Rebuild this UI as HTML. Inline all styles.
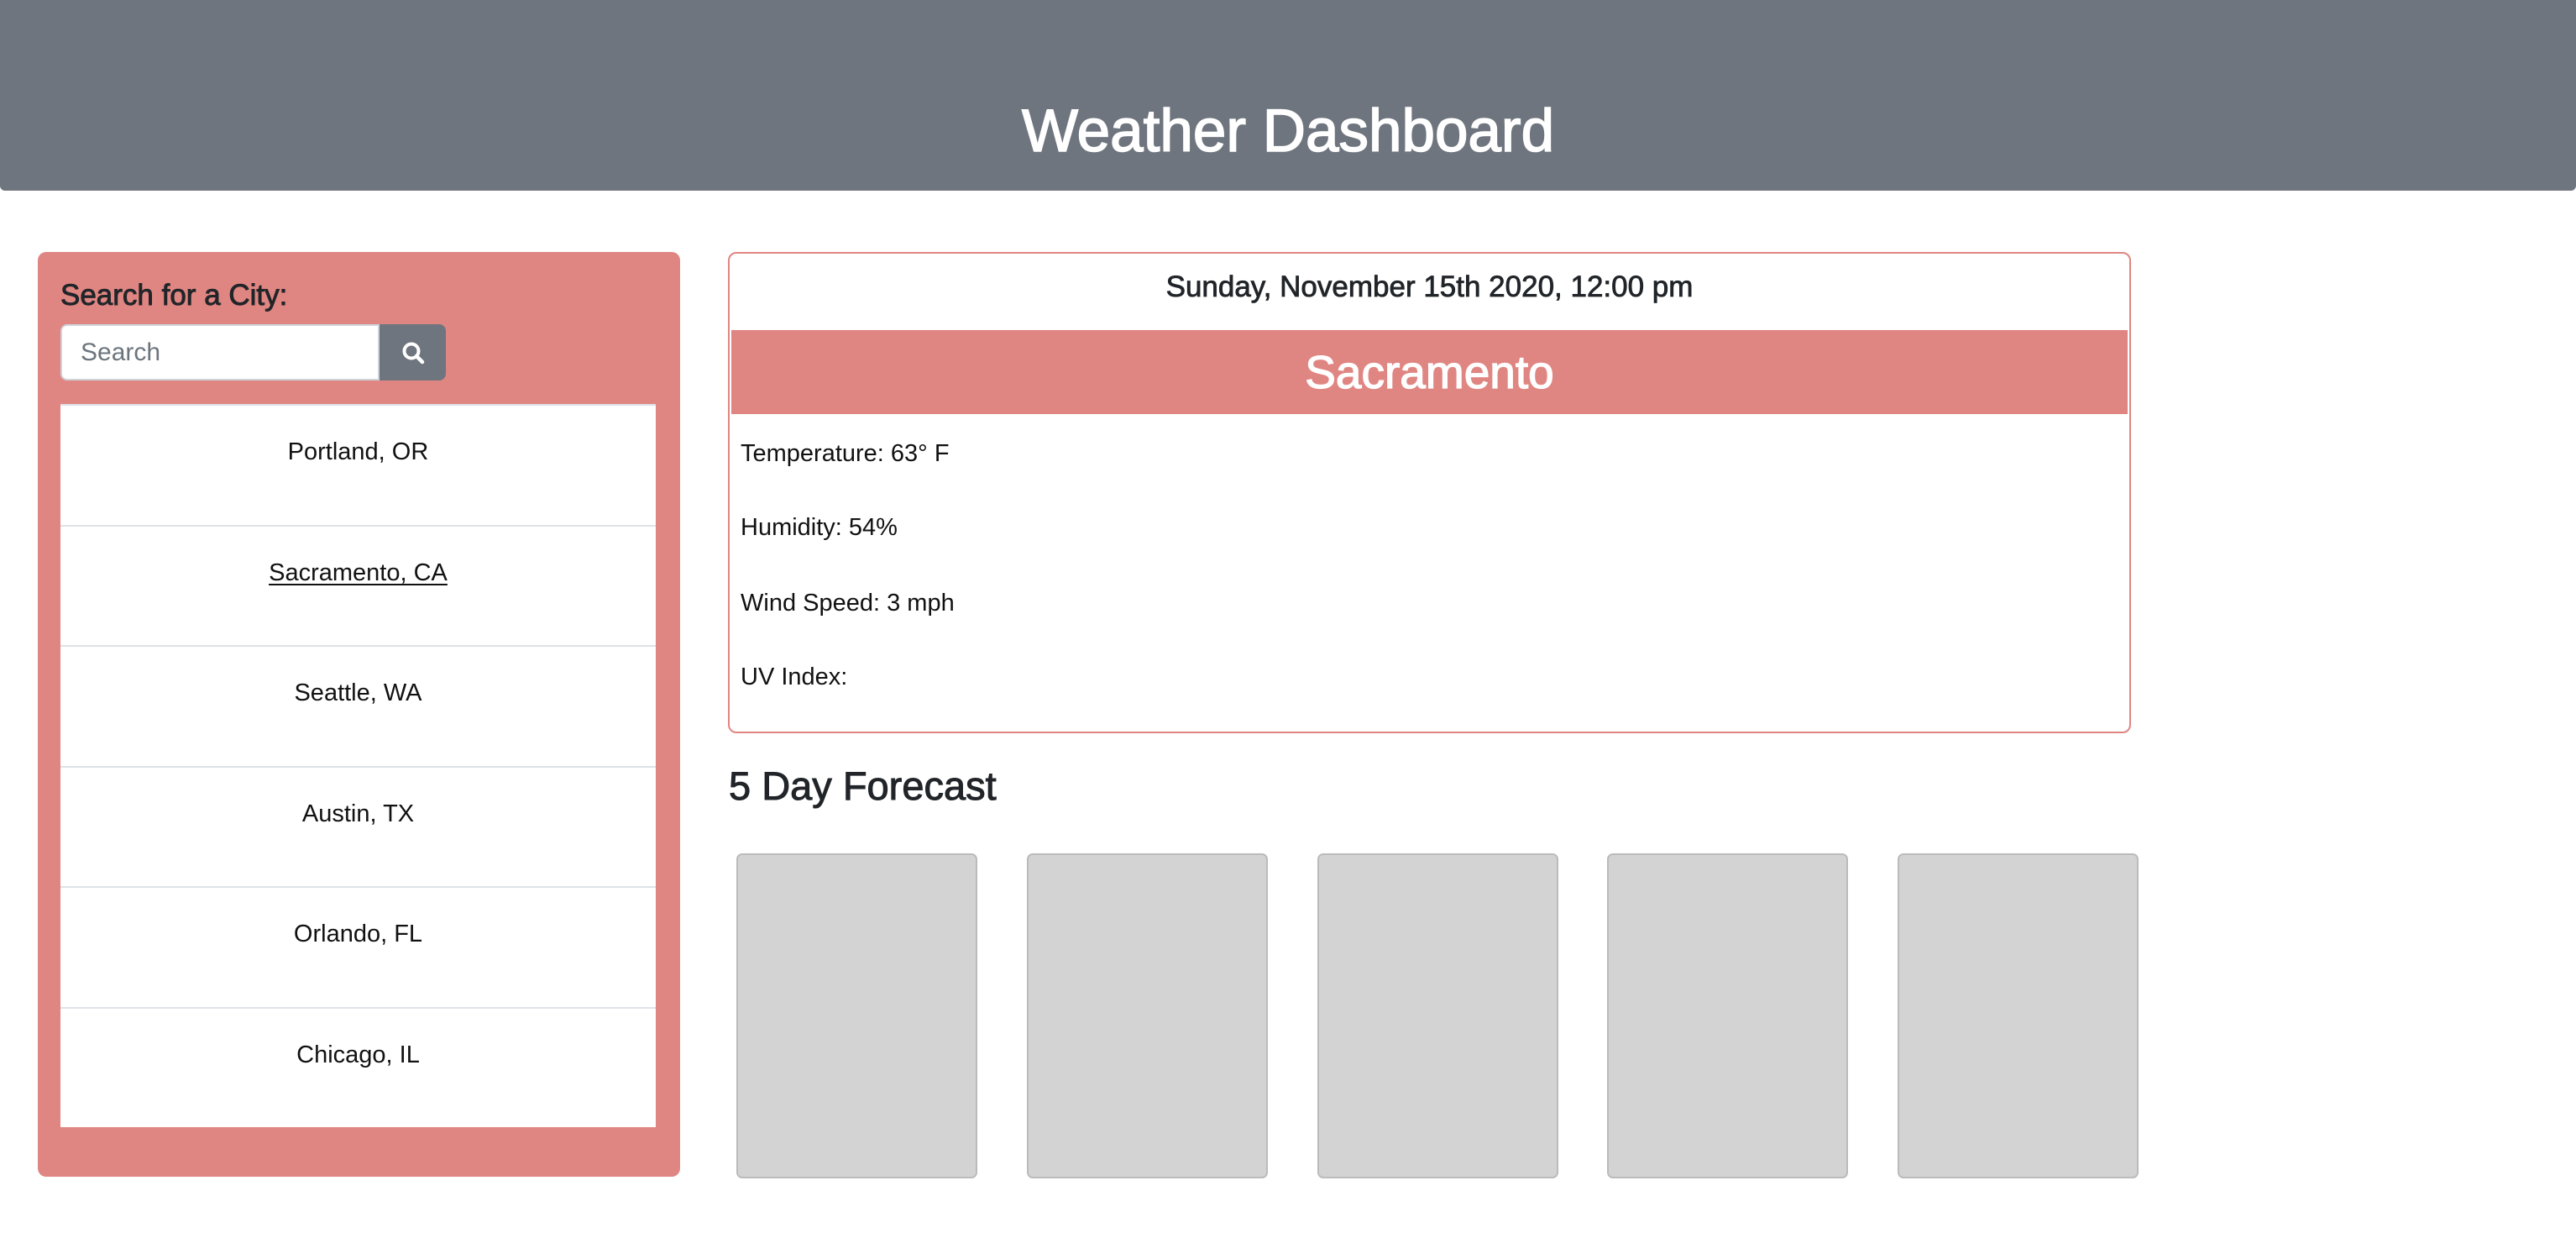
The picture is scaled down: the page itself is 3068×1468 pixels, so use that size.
<!DOCTYPE html>
<html><head><meta charset="utf-8">
<style>
*{box-sizing:border-box;margin:0;padding:0}
body{width:3068px;height:1468px;background:#fff;font-family:"Liberation Sans",sans-serif;color:#212529;position:relative;overflow:hidden}
.hdr{position:absolute;left:0;top:0;width:3068px;height:227px;background:#6f757e;border-radius:0 0 6px 6px}
.hdr h1{position:absolute;left:0;right:0;top:112px;text-align:center;color:#fff;font-weight:500;font-size:71px;line-height:90px;-webkit-text-stroke:1.6px #fff}
.side{position:absolute;left:45px;top:300px;width:765px;height:1101px;background:#e08682;border-radius:10px}
.side h2{position:absolute;left:27px;top:30px;font-size:35px;font-weight:500;line-height:44px;color:#212529;-webkit-text-stroke:0.9px #212529}
.inp{position:absolute;left:27px;top:86px;width:380px;height:67px;background:#fff;border:2px solid #ced4da;border-radius:8px 0 0 8px;font-size:30px;color:#6c757d;padding:16px 22px;line-height:32px}
.btn{position:absolute;left:407px;top:86px;width:79px;height:67px;background:#6f757e;border-radius:0 8px 8px 0}
.btn svg{position:absolute;left:26px;top:20px}
.list{position:absolute;left:27px;top:181px;width:709px}
.item{height:143.5px;background:#fff;border-top:2px solid #dee2e6;text-align:center;font-size:29px;line-height:40px;padding-top:35px;color:#111}
.item u{text-underline-offset:4px}
.card{position:absolute;left:867px;top:300px;width:1671px;height:573px;border:2px solid #e08682;border-radius:10px}
.date{position:absolute;left:0;right:0;top:18px;text-align:center;font-size:35px;font-weight:500;line-height:44px;-webkit-text-stroke:0.8px #212529}
.ban{position:absolute;left:2px;right:2px;top:91px;height:100px;background:#e08682;color:#fff;text-align:center;font-size:55px;font-weight:500;line-height:100px;-webkit-text-stroke:1.3px #fff}
.p{position:absolute;left:13px;font-size:29px;line-height:36px;color:#111}
h3{position:absolute;left:868px;top:908px;font-size:47px;font-weight:500;line-height:56px;-webkit-text-stroke:1px #212529}
.fc{position:absolute;top:1016px;width:287px;height:387px;background:#d3d3d3;border:2px solid #bbb;border-radius:7px}
</style></head><body>
<div class="hdr"><h1>Weather Dashboard</h1></div>
<div class="side">
<h2>Search for a City:</h2>
<div class="inp">Search</div>
<div class="btn"><svg width="28" height="28" viewBox="0 0 28 28"><circle cx="12" cy="12" r="8.5" fill="none" stroke="#fff" stroke-width="4"/><path d="M18 18 L25 25" stroke="#fff" stroke-width="4.5" stroke-linecap="round"/></svg></div>
<div class="list">
<div class="item">Portland, OR</div>
<div class="item"><u>Sacramento, CA</u></div>
<div class="item">Seattle, WA</div>
<div class="item">Austin, TX</div>
<div class="item">Orlando, FL</div>
<div class="item">Chicago, IL</div>
</div>
</div>
<div class="card">
<div class="date">Sunday, November 15th 2020, 12:00 pm</div>
<div class="ban">Sacramento</div>
<div class="p" style="top:220px">Temperature: 63° F</div>
<div class="p" style="top:308px">Humidity: 54%</div>
<div class="p" style="top:398px">Wind Speed: 3 mph</div>
<div class="p" style="top:486px">UV Index:</div>
</div>
<h3>5 Day Forecast</h3>
<div class="fc" style="left:877px"></div>
<div class="fc" style="left:1223px"></div>
<div class="fc" style="left:1569px"></div>
<div class="fc" style="left:1914px"></div>
<div class="fc" style="left:2260px"></div>
</body></html>
